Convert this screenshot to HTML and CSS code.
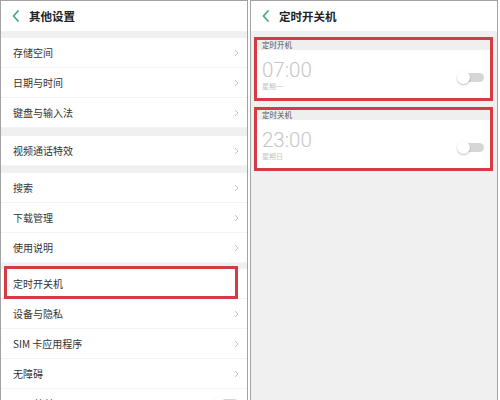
FILE: index.html
```html
<!DOCTYPE html>
<html lang="zh-CN">
<head>
  <meta charset="UTF-8">
  <title>定时开关机</title>
  <link rel="stylesheet" href="styles.css">
</head>
<body>
  <div class="phone">
    <div class="bar">
      <svg class="back" width="8" height="12" viewBox="0 0 8 12"><polyline points="6,1 1.5,6 6,11" /></svg>
      <span class="title">其他设置</span>
    </div>
    <div class="gap g7"></div>
    <div class="row">存储空间<svg class="arrow" width="5" height="8" viewBox="0 0 5 8"><polyline points="1,1 4,4 1,7" /></svg></div>
    <div class="row">日期与时间<svg class="arrow" width="5" height="8" viewBox="0 0 5 8"><polyline points="1,1 4,4 1,7" /></svg></div>
    <div class="row">键盘与输入法<svg class="arrow" width="5" height="8" viewBox="0 0 5 8"><polyline points="1,1 4,4 1,7" /></svg></div>
    <div class="gap g8"></div>
    <div class="row">视频通话特效<svg class="arrow" width="5" height="8" viewBox="0 0 5 8"><polyline points="1,1 4,4 1,7" /></svg></div>
    <div class="gap g7"></div>
    <div class="row">搜索<svg class="arrow" width="5" height="8" viewBox="0 0 5 8"><polyline points="1,1 4,4 1,7" /></svg></div>
    <div class="row">下载管理<svg class="arrow" width="5" height="8" viewBox="0 0 5 8"><polyline points="1,1 4,4 1,7" /></svg></div>
    <div class="row">使用说明<svg class="arrow" width="5" height="8" viewBox="0 0 5 8"><polyline points="1,1 4,4 1,7" /></svg></div>
    <div class="gap g6"></div>
    <div class="row mark">定时开关机</div>
    <div class="row">设备与隐私<svg class="arrow" width="5" height="8" viewBox="0 0 5 8"><polyline points="1,1 4,4 1,7" /></svg></div>
    <div class="row">SIM 卡应用程序<svg class="arrow" width="5" height="8" viewBox="0 0 5 8"><polyline points="1,1 4,4 1,7" /></svg></div>
    <div class="row">无障碍<svg class="arrow" width="5" height="8" viewBox="0 0 5 8"><polyline points="1,1 4,4 1,7" /></svg></div>
    <div class="row">OTG 连接<span class="switch"></span></div>
  </div>

  <div class="phone grey">
    <div class="bar">
      <svg class="back" width="8" height="12" viewBox="0 0 8 12"><polyline points="6,1 1.5,6 6,11" /></svg>
      <span class="title">定时开关机</span>
    </div>
    <div class="groups">
      <div class="group">
        <div class="label">定时开机</div>
        <div class="card">
          <div>
            <div class="time">07:00</div>
            <div class="day">星期一</div>
          </div>
          <span class="switch"></span>
        </div>
      </div>
      <div class="group">
        <div class="label">定时关机</div>
        <div class="card">
          <div>
            <div class="time">23:00</div>
            <div class="day">星期日</div>
          </div>
          <span class="switch"></span>
        </div>
      </div>
    </div>
  </div>
</body>
</html>
```

FILE: styles.css
```css
body {
  margin: 0;
  background: #fff;
  font-family: "Noto Sans CJK SC", "Noto Sans", sans-serif;
  display: flex;
  gap: 2px;
  height: 400px;
  overflow: hidden;
}

.phone {
  width: 248px;
  height: 400px;
  box-sizing: border-box;
  border: 1px solid #a3a3a3;
  border-bottom: none;
  background: #fff;
  overflow: hidden;
  flex-shrink: 0;
}

.phone.grey {
  background: #f0f0f0;
}

.bar {
  height: 30px;
  display: flex;
  align-items: center;
  padding-left: 11px;
  background: #fff;
}

.back {
  fill: none;
  stroke: #48a88c;
  stroke-width: 1.8;
  stroke-linecap: round;
  stroke-linejoin: round;
}

.title {
  margin-left: 9px;
  font-size: 11.5px;
  font-weight: bold;
  color: #222;
}

.gap {
  background: #f0f0f0;
}

.g6 { height: 6px; }
.g7 { height: 7px; }
.g8 { height: 8px; }

.row {
  height: 30px;
  box-sizing: border-box;
  display: flex;
  align-items: center;
  justify-content: space-between;
  padding: 0 8px 0 12px;
  font-size: 10px;
  color: #333;
  border-bottom: 1px solid #f4f4f4;
  position: relative;
}

.arrow {
  fill: none;
  stroke: #c4c4c4;
  stroke-width: 1;
}

.mark::after {
  content: "";
  position: absolute;
  top: -3px;
  bottom: -1px;
  left: 3px;
  right: 9px;
  border: 3px solid #d43b42;
}

.switch {
  position: relative;
  width: 26px;
  height: 9px;
  border-radius: 5px;
  background: #d6d6d6;
}

.switch::before {
  content: "";
  position: absolute;
  left: -1px;
  top: -2px;
  width: 13px;
  height: 13px;
  border-radius: 50%;
  background: #fff;
  box-shadow: 0 1px 2px rgba(0, 0, 0, 0.25);
}

.groups {
  padding: 6px 4px 0 3px;
  display: flex;
  flex-direction: column;
  gap: 6px;
}

.group {
  border: 3px solid #d43b42;
}

.label {
  height: 10px;
  line-height: 10px;
  padding-left: 5px;
  font-size: 7.5px;
  color: #555;
  background: #efefef;
}

.card {
  height: 48px;
  background: #fff;
  display: flex;
  align-items: center;
  justify-content: space-between;
  padding: 0 6px 0 5px;
}

.card .switch {
  margin-top: 6px;
}

.time {
  font-family: Roboto, "Noto Sans", sans-serif;
  font-weight: 300;
  font-size: 20.5px;
  line-height: 22px;
  color: #c6c6c6;
  margin-top: 2px;
}

.day {
  font-size: 7px;
  line-height: 10px;
  color: #c4c4c4;
}
```
